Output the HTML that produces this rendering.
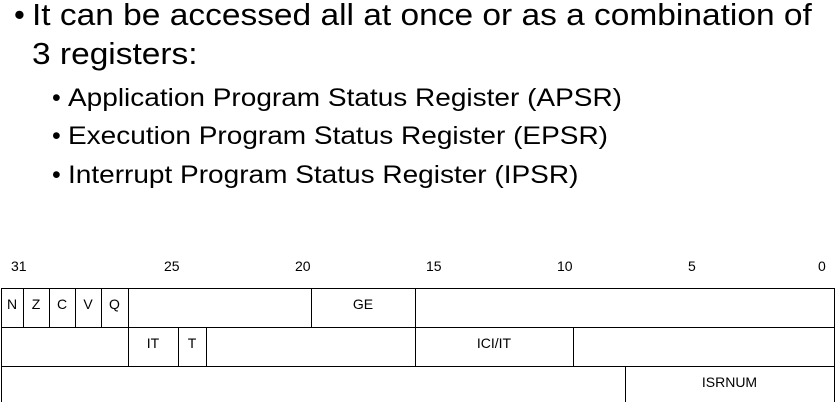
<html><head><style>
body{margin:0;width:837px;height:402px;background:#fff;position:relative;overflow:hidden;font-family:"Liberation Sans",sans-serif;color:#000}
.t{position:absolute;white-space:nowrap;transform-origin:0 0}
.a{transform:scaleX(1.08)}
.b{transform:scaleX(1.12)}
.l{position:absolute;background:#000}
.c{position:absolute;font-size:14px;text-align:center}
</style></head><body>
<div class="t" style="left:14px;top:-3px;font-size:31px">•</div>
<div class="t a" style="left:32px;top:-3px;font-size:31px">It can be accessed all at once or as a combination of</div>
<div class="t a" style="left:32px;top:36px;font-size:31px">3 registers:</div>
<div class="t" style="left:52px;top:84px;font-size:25px">•</div>
<div class="t b" style="left:68px;top:84px;font-size:25px">Application Program Status Register (APSR)</div>
<div class="t" style="left:52px;top:122px;font-size:25px">•</div>
<div class="t b" style="left:68px;top:122px;font-size:25px">Execution Program Status Register (EPSR)</div>
<div class="t" style="left:52px;top:161px;font-size:25px">•</div>
<div class="t b" style="left:68px;top:161px;font-size:25px">Interrupt Program Status Register (IPSR)</div>
<div class="t" style="left:11px;top:258px;font-size:14px">31</div>
<div class="t" style="left:164px;top:258px;font-size:14px">25</div>
<div class="t" style="left:295px;top:258px;font-size:14px">20</div>
<div class="t" style="left:426px;top:258px;font-size:14px">15</div>
<div class="t" style="left:557px;top:258px;font-size:14px">10</div>
<div class="t" style="left:688px;top:258px;font-size:14px">5</div>
<div class="t" style="left:818px;top:258px;font-size:14px">0</div>
<div class="l" style="left:1px;top:288px;width:834px;height:1px"></div>
<div class="l" style="left:1px;top:327px;width:834px;height:1px"></div>
<div class="l" style="left:1px;top:366px;width:834px;height:1px"></div>
<div class="l" style="left:1px;top:288px;width:1px;height:114px"></div>
<div class="l" style="left:834px;top:288px;width:1px;height:114px"></div>
<div class="l" style="left:23px;top:288px;width:1px;height:39px"></div>
<div class="l" style="left:49px;top:288px;width:1px;height:39px"></div>
<div class="l" style="left:75px;top:288px;width:1px;height:39px"></div>
<div class="l" style="left:101px;top:288px;width:1px;height:39px"></div>
<div class="l" style="left:128px;top:288px;width:1px;height:78px"></div>
<div class="l" style="left:311px;top:288px;width:1px;height:39px"></div>
<div class="l" style="left:415px;top:288px;width:1px;height:78px"></div>
<div class="l" style="left:178px;top:327px;width:1px;height:39px"></div>
<div class="l" style="left:206px;top:327px;width:1px;height:39px"></div>
<div class="l" style="left:573px;top:327px;width:1px;height:39px"></div>
<div class="l" style="left:625px;top:366px;width:1px;height:36px"></div>
<div class="c" style="left:1px;top:296px;width:22px">N</div>
<div class="c" style="left:23px;top:296px;width:26px">Z</div>
<div class="c" style="left:49px;top:296px;width:26px">C</div>
<div class="c" style="left:75px;top:296px;width:26px">V</div>
<div class="c" style="left:101px;top:296px;width:27px">Q</div>
<div class="c" style="left:311px;top:296px;width:104px">GE</div>
<div class="c" style="left:128px;top:335px;width:50px">IT</div>
<div class="c" style="left:178px;top:335px;width:28px">T</div>
<div class="c" style="left:415px;top:335px;width:158px">ICI/IT</div>
<div class="c" style="left:625px;top:374px;width:209px">ISRNUM</div>
</body></html>
